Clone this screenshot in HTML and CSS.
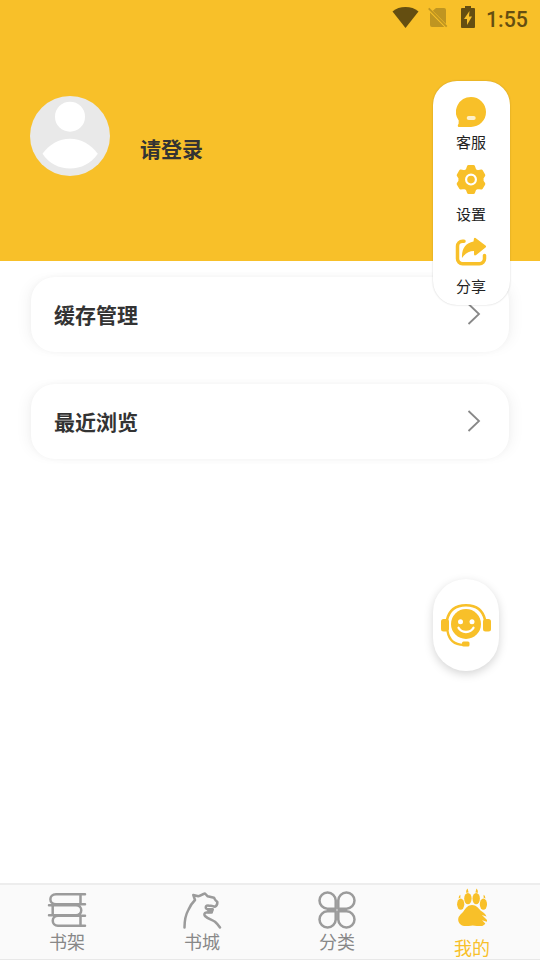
FILE: index.html
```html
<!DOCTYPE html>
<html lang="zh-CN">
<head>
<meta charset="utf-8">
<title>我的</title>
<link rel="stylesheet" href="styles.css">
</head>
<body>
<div class="app">
  <header class="hero">
    <div class="status">
      <svg class="wifi" width="27" height="21" viewBox="0 0 27 21"><path d="M.5 4.400C4 1.300 8.500 0 13.500 0S23 1.300 26.500 4.400L13.500 21z"/></svg>
      <svg class="sim" width="20" height="21" viewBox="0 0 20 21"><path class="faded" d="M8 1h8a2 2 0 0 1 2 2v14L4.800 3.800zM2 5.600L16.400 20H4a2 2 0 0 1-2-2z"/><path class="slash" d="M.7 1.400l18 18.300"/></svg>
      <svg class="battery" width="14" height="22" viewBox="0 0 14 22"><path fill-rule="evenodd" d="M4 0h6v2h3a1 1 0 0 1 1 1v18a1 1 0 0 1-1 1H1a1 1 0 0 1-1-1V3a1 1 0 0 1 1-1h3zM8.500 5L3 13h3v6l5-8.500H8z"/></svg>
      <span class="clock">1:55</span>
    </div>
    <div class="profile">
      <svg class="avatar" width="80" height="80" viewBox="0 0 80 80"><circle cx="40" cy="40" r="40" fill="#e9e9e9"/><circle cx="40" cy="20.700" r="15" fill="#fff"/><path d="M12.500 57.700C19 48.500 29 42.700 40 42.700S61 48.500 67.800 57.700C61 67.500 51 72.500 40 72.500S19 67.500 12.500 57.700z" fill="#fff"/></svg>
      <span class="login">请登录</span>
    </div>
  </header>

  <main class="content">
    <div class="row"><div class="card"><span>缓存管理</span><svg width="14" height="22" viewBox="0 0 14 22"><path d="M1.500 1l10.500 10L1.500 21"/></svg></div></div>
    <div class="row"><div class="card"><span>最近浏览</span><svg width="14" height="22" viewBox="0 0 14 22"><path d="M1.500 1l10.500 10L1.500 21"/></svg></div></div>
  </main>

  <nav class="tabs">
    <div class="tab">
      <svg width="40" height="38" viewBox="0 0 40 38"><g class="line"><path d="M38 3.300H9c-7.500 0-7.500 10 0 10h29M33.500 3.300v10M2 14.200h27c7 0 7 10 0 10H2M5.700 14.200v10M38 24.800H11c-7 0-7 10 0 10h27M33.500 24.800v10"/></g></svg>
      <span>书架</span>
    </div>
    <div class="tab">
      <svg width="40" height="38" viewBox="0 0 40 38"><path class="line" d="M2.500 36.500C2.500 30 3.500 24 6.300 19 8 15 10 12 13 9L11.300 4l5 1.300c2.500-.2 4-2.300 6.700-2.800l2.700 2.800 6.300 1.400c1 1.800 1 2.800 3.300 4.100.2 2-.5 4-2.300 4.900-1.500.2-2.500-.9-4-1-2 .2-4-.7-5 .6-.6 1.700.2 2.900 1.700 3h5l-1 3-5.500.3c-2 .2-2.200 2-1.200 3.400 3 3 6.500 3.500 10 5.700 2 1.700 3.500 3.500 5 5.800"/><path d="M25 18h6.500l-1 4.500h-5z" fill="#9b9b9b"/></svg>
      <span>书城</span>
    </div>
    <div class="tab">
      <svg width="40" height="38" viewBox="0 0 40 38"><g class="line"><path d="M18.700 17.700h-8.300a8.100 8.100 0 1 1 8.300-8.300zM21.300 17.700V9.400a8.100 8.100 0 1 1 8.300 8.300zM18.700 20.300v8.300a8.100 8.100 0 1 1-8.300-8.300zM21.300 20.300h8.300a8.100 8.100 0 1 1-8.300 8.300z"/></g></svg>
      <span>分类</span>
    </div>
    <div class="tab active">
      <svg width="30" height="38" viewBox="0 0 30 38"><g fill="#f8c029"><ellipse cx="3.700" cy="16.200" rx="3.600" ry="5.600"/><ellipse cx="10.900" cy="10.600" rx="3.700" ry="5.700"/><ellipse cx="19.200" cy="10.600" rx="3.700" ry="5.700"/><ellipse cx="26.400" cy="16.200" rx="3.600" ry="5.600"/><path d="M1.600 10.400q0-2.800 1.800-3.700v3zM9 4.800Q9 1.500 10.600.5l1 4zM21 4.800Q21 1.500 19.400.5l-1 4zM28.400 10.400q0-2.800-1.800-3.700v3z"/><path d="M15 17.100c4.500 0 6.500 3.200 8.500 5.500 2.500 1.500 4.800 3 6 6l-4.600-1.500 4.900 4.700c.5.700.3 1.500-.1 2l-4.600-1.600 3.200 3.300c-1.700 2.800-5.200 3.200-8.500 2.400-3.500-.8-5.500-.6-8 .1C5.300 39 1 36 1.200 31.200c.2-3.500 3.200-5 5.400-7.900 2.200-3.200 4.400-6.200 8.400-6.200z"/></g></svg>
      <span>我的</span>
    </div>
  </nav>

  <aside class="menu">
    <div class="item">
      <svg width="30" height="32" viewBox="0 0 30 32"><path d="M15 1a15 15 0 1 1 0 30H3.500c-2.300 0-2-1.800-.9-3.200l.1-3.200A15 15 0 0 1 15 1z" fill="#f8c029"/><rect x="10.700" y="20" width="9" height="4" rx="2" fill="#fff" opacity=".75"/></svg>
      <span>客服</span>
    </div>
    <div class="item">
      <svg width="30" height="32" viewBox="0 0 30 32"><path d="M12.500 2.600h5l1.300 3.600 2.800 1.600 3.800-.7 2.400 4.200-1.700 2.700v3.200l1.700 2.700-2.400 4.200-3.800-.7-2.800 1.600-1.300 3.600h-5l-1.300-3.600-2.800-1.600-3.800.7-2.400-4.200 1.700-2.700V14l-1.700-2.700 2.400-4.200 3.800.7 2.800-1.600z" fill="#f8c029" stroke="#f8c029" stroke-width="3" stroke-linejoin="round"/><circle cx="15" cy="15.600" r="4.900" fill="#f8c029" stroke="#fff" stroke-width="2.200"/></svg>
      <span>设置</span>
    </div>
    <div class="item">
      <svg width="32" height="32" viewBox="0 0 32 32"><path d="M9 4.200H7.500a5 5 0 0 0-5 5v12.600a5 5 0 0 0 5 5h17a5 5 0 0 0 5-5V18.500" fill="none" stroke="#f8c029" stroke-width="3.500" stroke-linecap="round"/><path d="M19 1.300q.9-1 2.200.1l9.300 7.200q1.200 1 0 2l-9.300 7.500q-1.800 1.200-2.200-.8V14c-5 0-8.500 2-12 7C6.500 12 10.500 6 18.500 4.500z" fill="#f8c029"/></svg>
      <span>分享</span>
    </div>
  </aside>

  <div class="service">
    <svg width="50" height="46" viewBox="0 0 50 46"><g fill="none" stroke="#f8c029"><path d="M5.800 17.500C8 7 15.500 2.300 25 2.300S42 7 44.200 17.500" stroke-width="2.600"/><path d="M6.500 28c1.500 9 7.200 13.800 16 13.800" stroke-width="2.300"/></g><g fill="#f8c029"><rect x="0" y="16" width="8" height="12.500" rx="2.500"/><rect x="42" y="16" width="8" height="12.500" rx="2.500"/><circle cx="25" cy="21" r="15"/><rect x="21" y="38.500" width="7.500" height="5" rx="1.500"/></g><circle cx="19.500" cy="18.700" r="2.500" fill="#fff"/><circle cx="31" cy="18.700" r="2.500" fill="#fff"/><path d="M17.500 24.800c3 5.600 12 5.600 15 0" fill="none" stroke="#fff" stroke-width="2.300" stroke-linecap="round"/></svg>
  </div>
</div>
</body>
</html>
```
FILE: styles.css
```css
* { box-sizing: border-box; }

body {
  margin: 0;
  font-family: "Noto Sans CJK SC", sans-serif;
  color: #333;
  background: #fff;
}

svg { display: block; flex: none; }

.app {
  position: relative;
  display: flex;
  flex-direction: column;
  width: 540px;
  height: 960px;
  overflow: hidden;
}

.hero { height: 261px; flex: none; background: #f8c029; }

.status {
  display: flex;
  justify-content: flex-end;
  height: 36px;
  padding: 6px 12px 0 0;
  fill: #644e11;
}
.wifi { margin: 1px 9px 0 0; }
.sim { margin: 1px 13px 0 0; }
.battery { margin-right: 11px; }
.faded { fill: #bf9521; }
.slash { stroke: #bf9521; stroke-width: 1.8; }
.clock {
  font: 500 21.3px/27px Roboto, sans-serif;
  color: #644e11;
  width: 42px;
  white-space: nowrap;
}

.profile { display: flex; padding: 60px 30px 0; }
.login {
  margin: 36px 0 0 30px;
  font-size: 21px;
  line-height: 32px;
  font-weight: 700;
}

.content {
  flex: 1;
  display: flex;
  flex-direction: column;
  gap: 22px;
  padding: 11px 12px 0;
}
.row { overflow: hidden; padding: 5px 19px; flex: none; }
.card {
  display: flex;
  align-items: center;
  justify-content: space-between;
  height: 75px;
  padding: 0 28px 2px 23px;
  border-radius: 24px;
  background: #fff;
  box-shadow: 0 0 6px rgba(0, 0, 0, .03), -8px 0 14px -4px rgba(0, 0, 0, .045), 8px 0 14px -4px rgba(0, 0, 0, .045);
  font-size: 21px;
  font-weight: 700;
}
.card path { fill: none; stroke: #888; stroke-width: 1.8; }

.tabs {
  display: flex;
  height: 77px;
  flex: none;
  border-top: 2px solid #ededed;
  border-bottom: 1px solid #e8e8e8;
  background: #fafafa;
}
.tab {
  flex: 1;
  display: flex;
  flex-direction: column;
  align-items: center;
  padding: 6px 1px 0 0;
  font-size: 18px;
  line-height: 24px;
  color: #888;
}
.tab.active { padding-top: 3px; color: #f8c029; }
.tab.active span { margin-top: 9px; }
.line {
  fill: none;
  stroke: #9b9b9b;
  stroke-width: 2.5;
  stroke-linecap: round;
  stroke-linejoin: round;
}

.menu {
  position: absolute;
  left: 433px;
  top: 81px;
  width: 77px;
  height: 224px;
  padding: 15px 1px 0 0;
  border-radius: 24px;
  background: #fff;
  box-shadow: 0 0 2px rgba(0, 0, 0, .2);
}
.item {
  display: flex;
  flex-direction: column;
  align-items: center;
  height: 69px;
  font-size: 15px;
  line-height: 22px;
  color: #222;
}
.item:first-child { height: 68px; }
.item:first-child span { margin-top: 3px; }
.item:nth-child(2) { height: 73px; }
.item:nth-child(2) span { margin-top: 7px; }
.item:nth-child(3) span { margin-top: 6px; }

.service {
  position: absolute;
  left: 433px;
  top: 579px;
  display: flex;
  justify-content: center;
  width: 66px;
  height: 92px;
  padding-top: 24px;
  border-radius: 33px;
  background: #fff;
  box-shadow: 0 3px 10px rgba(0, 0, 0, .17);
}
```
